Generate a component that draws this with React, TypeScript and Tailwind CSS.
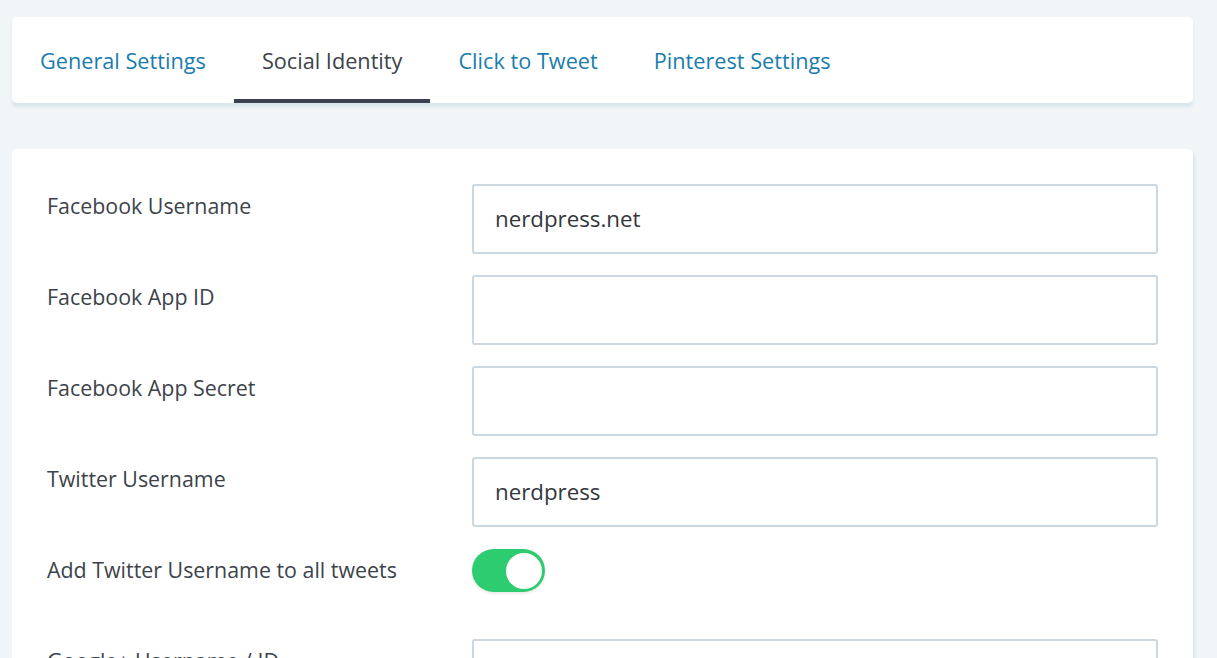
import React from 'react';

const tabs = [
  { label: 'General Settings', active: false },
  { label: 'Social Identity', active: true },
  { label: 'Click to Tweet', active: false },
  { label: 'Pinterest Settings', active: false },
];

const fields = [
  { label: 'Facebook Username', value: 'nerdpress.net', type: 'text' },
  { label: 'Facebook App ID', value: '', type: 'text' },
  { label: 'Facebook App Secret', value: '', type: 'text' },
  { label: 'Twitter Username', value: 'nerdpress', type: 'text' },
  { label: 'Add Twitter Username to all tweets', value: '', type: 'toggle' },
  { label: 'Google+ Username / ID', value: '', type: 'text' },
];

function Toggle({ on }: { on: boolean }) {
  return (
    <div
      className={`mt-px flex h-[43px] w-[73px] items-center rounded-full px-[3px] shadow-[0_2px_3px_rgba(0,0,0,0.08)] ${
        on ? 'justify-end bg-[#2ecc71]' : 'justify-start bg-[#dfe6ec]'
      }`}
    >
      <div className="h-[36px] w-[36px] rounded-full bg-white" />
    </div>
  );
}

export default function App() {
  return (
    <div
      className="h-[658px] overflow-hidden bg-[#f1f5f8] px-3 pt-[17px]"
      style={{ fontFamily: '"Open Sans", "Noto Sans", sans-serif' }}
    >
      <div className="flex h-[86px] w-[1181px] items-stretch rounded-[5px] bg-white shadow-[0_4px_3px_rgba(190,210,222,0.45)]">
        {tabs.map((tab) => (
          <div
            key={tab.label}
            className={`flex items-center border-b-[4px] px-[28px] pt-[7px] text-[21.7px] ${
              tab.active ? 'border-[#3a4150] text-[#3c434a]' : 'border-transparent text-[#1a7cad]'
            }`}
          >
            {tab.label}
          </div>
        ))}
      </div>

      <div className="mt-[46px] w-[1181px] rounded-[5px] bg-white px-[35px] pt-[35px] pb-10 shadow-[2px_3px_3px_rgba(190,210,222,0.45)]">
        <div className="flex flex-col gap-[21px]">
          {fields.map((field) => (
            <div key={field.label} className="flex h-[70px] items-start">
              <div className="w-[425px] pt-[7px] text-[21.4px] leading-[30px] text-[#3c434a]">
                {field.label}
              </div>
              {field.type === 'toggle' ? (
                <Toggle on />
              ) : (
                <div className="flex h-[70px] w-[686px] items-center rounded-[3px] border-2 border-[#cbd7e1] bg-white px-[21px] text-[22.3px] text-[#32373c]">
                  {field.value}
                </div>
              )}
            </div>
          ))}
        </div>
      </div>
    </div>
  );
}
